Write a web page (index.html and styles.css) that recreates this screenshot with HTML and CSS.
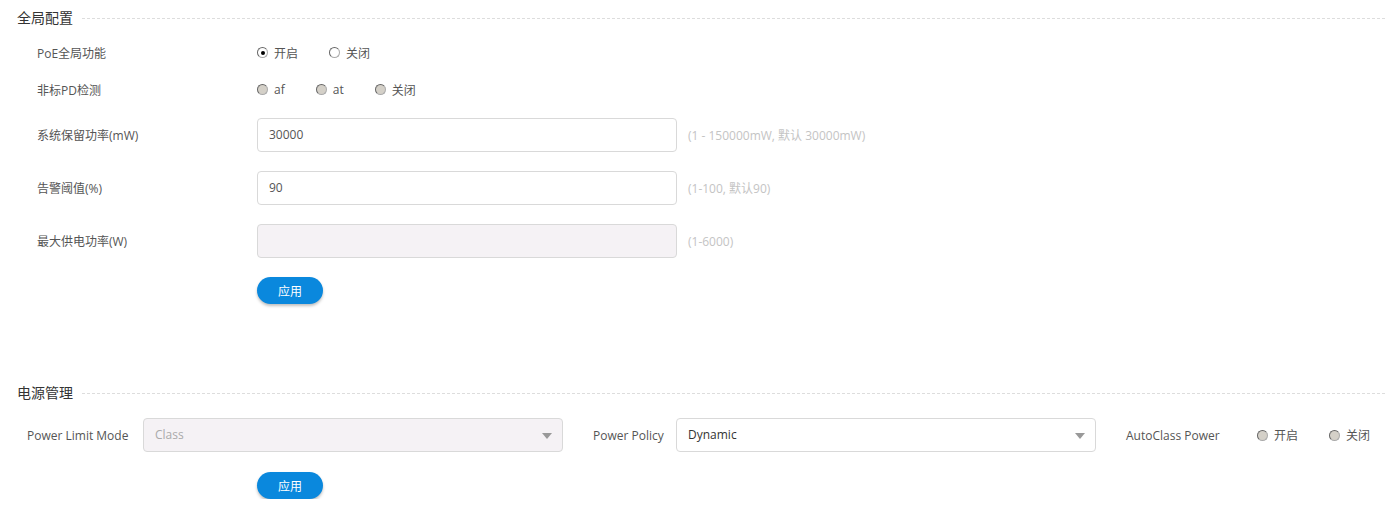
FILE: index.html
```html
<!DOCTYPE html>
<html lang="zh-CN">
<head>
    <meta charset="UTF-8">
    <title>PoE 配置</title>
    <link rel="stylesheet" href="styles.css">
</head>
<body>
    <div class="page">
        <div class="section-title">
            <span>全局配置</span>
            <div class="dash"></div>
        </div>

        <div class="form">
            <div class="row radio-row">
                <label class="label">PoE全局功能</label>
                <div class="radios">
                    <span class="opt"><i class="radio checked"></i>开启</span>
                    <span class="opt"><i class="radio"></i>关闭</span>
                </div>
            </div>
            <div class="row radio-row">
                <label class="label">非标PD检测</label>
                <div class="radios">
                    <span class="opt"><i class="radio disabled"></i>af</span>
                    <span class="opt"><i class="radio disabled"></i>at</span>
                    <span class="opt"><i class="radio disabled"></i>关闭</span>
                </div>
            </div>
            <div class="row input-row first">
                <label class="label">系统保留功率(mW)</label>
                <div class="input">30000</div>
                <span class="hint">(1 - 150000mW, 默认 30000mW)</span>
            </div>
            <div class="row input-row">
                <label class="label">告警阈值(%)</label>
                <div class="input">90</div>
                <span class="hint">(1-100, 默认90)</span>
            </div>
            <div class="row input-row">
                <label class="label">最大供电功率(W)</label>
                <div class="input disabled"></div>
                <span class="hint">(1-6000)</span>
            </div>
            <div class="btn-row">
                <button class="btn">应用</button>
            </div>
        </div>

        <div class="section-title second">
            <span>电源管理</span>
            <div class="dash"></div>
        </div>

        <div class="power-row">
            <label class="plabel mode">Power Limit Mode</label>
            <div class="select disabled">Class<i class="caret"></i></div>
            <label class="plabel policy">Power Policy</label>
            <div class="select">Dynamic<i class="caret"></i></div>
            <label class="plabel auto">AutoClass Power</label>
            <div class="radios">
                <span class="opt"><i class="radio disabled"></i>开启</span>
                <span class="opt"><i class="radio disabled"></i>关闭</span>
            </div>
        </div>
        <div class="btn-row second">
            <button class="btn">应用</button>
        </div>
    </div>
</body>
</html>
```

FILE: styles.css
```css
body {
    margin: 0;
    font-family: "Open Sans", "Noto Sans CJK SC", sans-serif;
    font-size: 12px;
    color: #555;
    background: #fff;
}
.page {
    padding: 0 0 0 17px;
}
.section-title {
    display: flex;
    align-items: center;
    height: 34px;
    font-size: 14px;
    color: #333;
}
.section-title.second {
    margin-top: 71px;
}
.dash {
    flex: 1;
    margin-left: 9px;
    border-top: 1px dashed #ddd;
    position: relative;
    top: 1px;
}
.form {
    padding-left: 20px;
}
.row {
    display: flex;
    align-items: center;
}
.label {
    width: 220px;
    color: #555;
}
.radio-row {
    height: 37px;
}
.radios {
    display: flex;
    gap: 31px;
}
.opt {
    display: flex;
    align-items: center;
    color: #555;
}
.radio {
    display: inline-block;
    box-sizing: border-box;
    width: 11px;
    height: 11px;
    border-radius: 50%;
    border: 1px solid #aaa;
    border-left-color: #666;
    border-top-color: #666;
    background: #fff;
    margin-right: 6px;
    position: relative;
}
.radio.checked::after {
    content: "";
    position: absolute;
    left: 2.5px;
    top: 2.5px;
    width: 4px;
    height: 4px;
    border-radius: 50%;
    background: #000;
}
.radio.disabled {
    background: #d4d0c8;
}
.input-row {
    height: 34px;
    margin-bottom: 19px;
}
.input-row.first {
    margin-top: 10px;
}
.input {
    box-sizing: border-box;
    width: 420px;
    height: 34px;
    border: 1px solid #d9d9d9;
    border-radius: 4px;
    padding: 0 11px;
    line-height: 32px;
    color: #555;
}
.input.disabled {
    background: #f5f2f5;
}
.hint {
    margin-left: 11px;
    color: #c4c4c4;
}
.btn-row {
    padding-left: 220px;
    margin-top: 1px;
}
.btn-row.second {
    padding-left: 240px;
    margin-top: 20px;
}
.btn {
    width: 66px;
    height: 27px;
    border: none;
    border-radius: 14px;
    background: #0a88dd;
    color: #fff;
    font-family: "Noto Sans CJK SC", sans-serif;
    font-size: 12px;
    box-shadow: 0 2px 3px rgba(0, 0, 0, 0.25);
    cursor: pointer;
}
.power-row {
    display: flex;
    align-items: center;
    height: 34px;
    margin-top: 9px;
    padding-left: 10px;
}
.plabel {
    color: #555;
    white-space: nowrap;
}
.plabel.mode {
    width: 116px;
}
.plabel.policy {
    width: 83px;
}
.plabel.auto {
    width: 131px;
}
.select {
    box-sizing: border-box;
    position: relative;
    width: 420px;
    height: 34px;
    border: 1px solid #d9d9d9;
    border-radius: 4px;
    padding: 0 11px;
    line-height: 32px;
    color: #333;
    margin-right: 30px;
}
.select.disabled {
    background: #f5f2f5;
    color: #aaa;
}
.caret {
    position: absolute;
    right: 10px;
    top: 14px;
    width: 0;
    height: 0;
    border-left: 5px solid transparent;
    border-right: 5px solid transparent;
    border-top: 6px solid #999;
}
```
